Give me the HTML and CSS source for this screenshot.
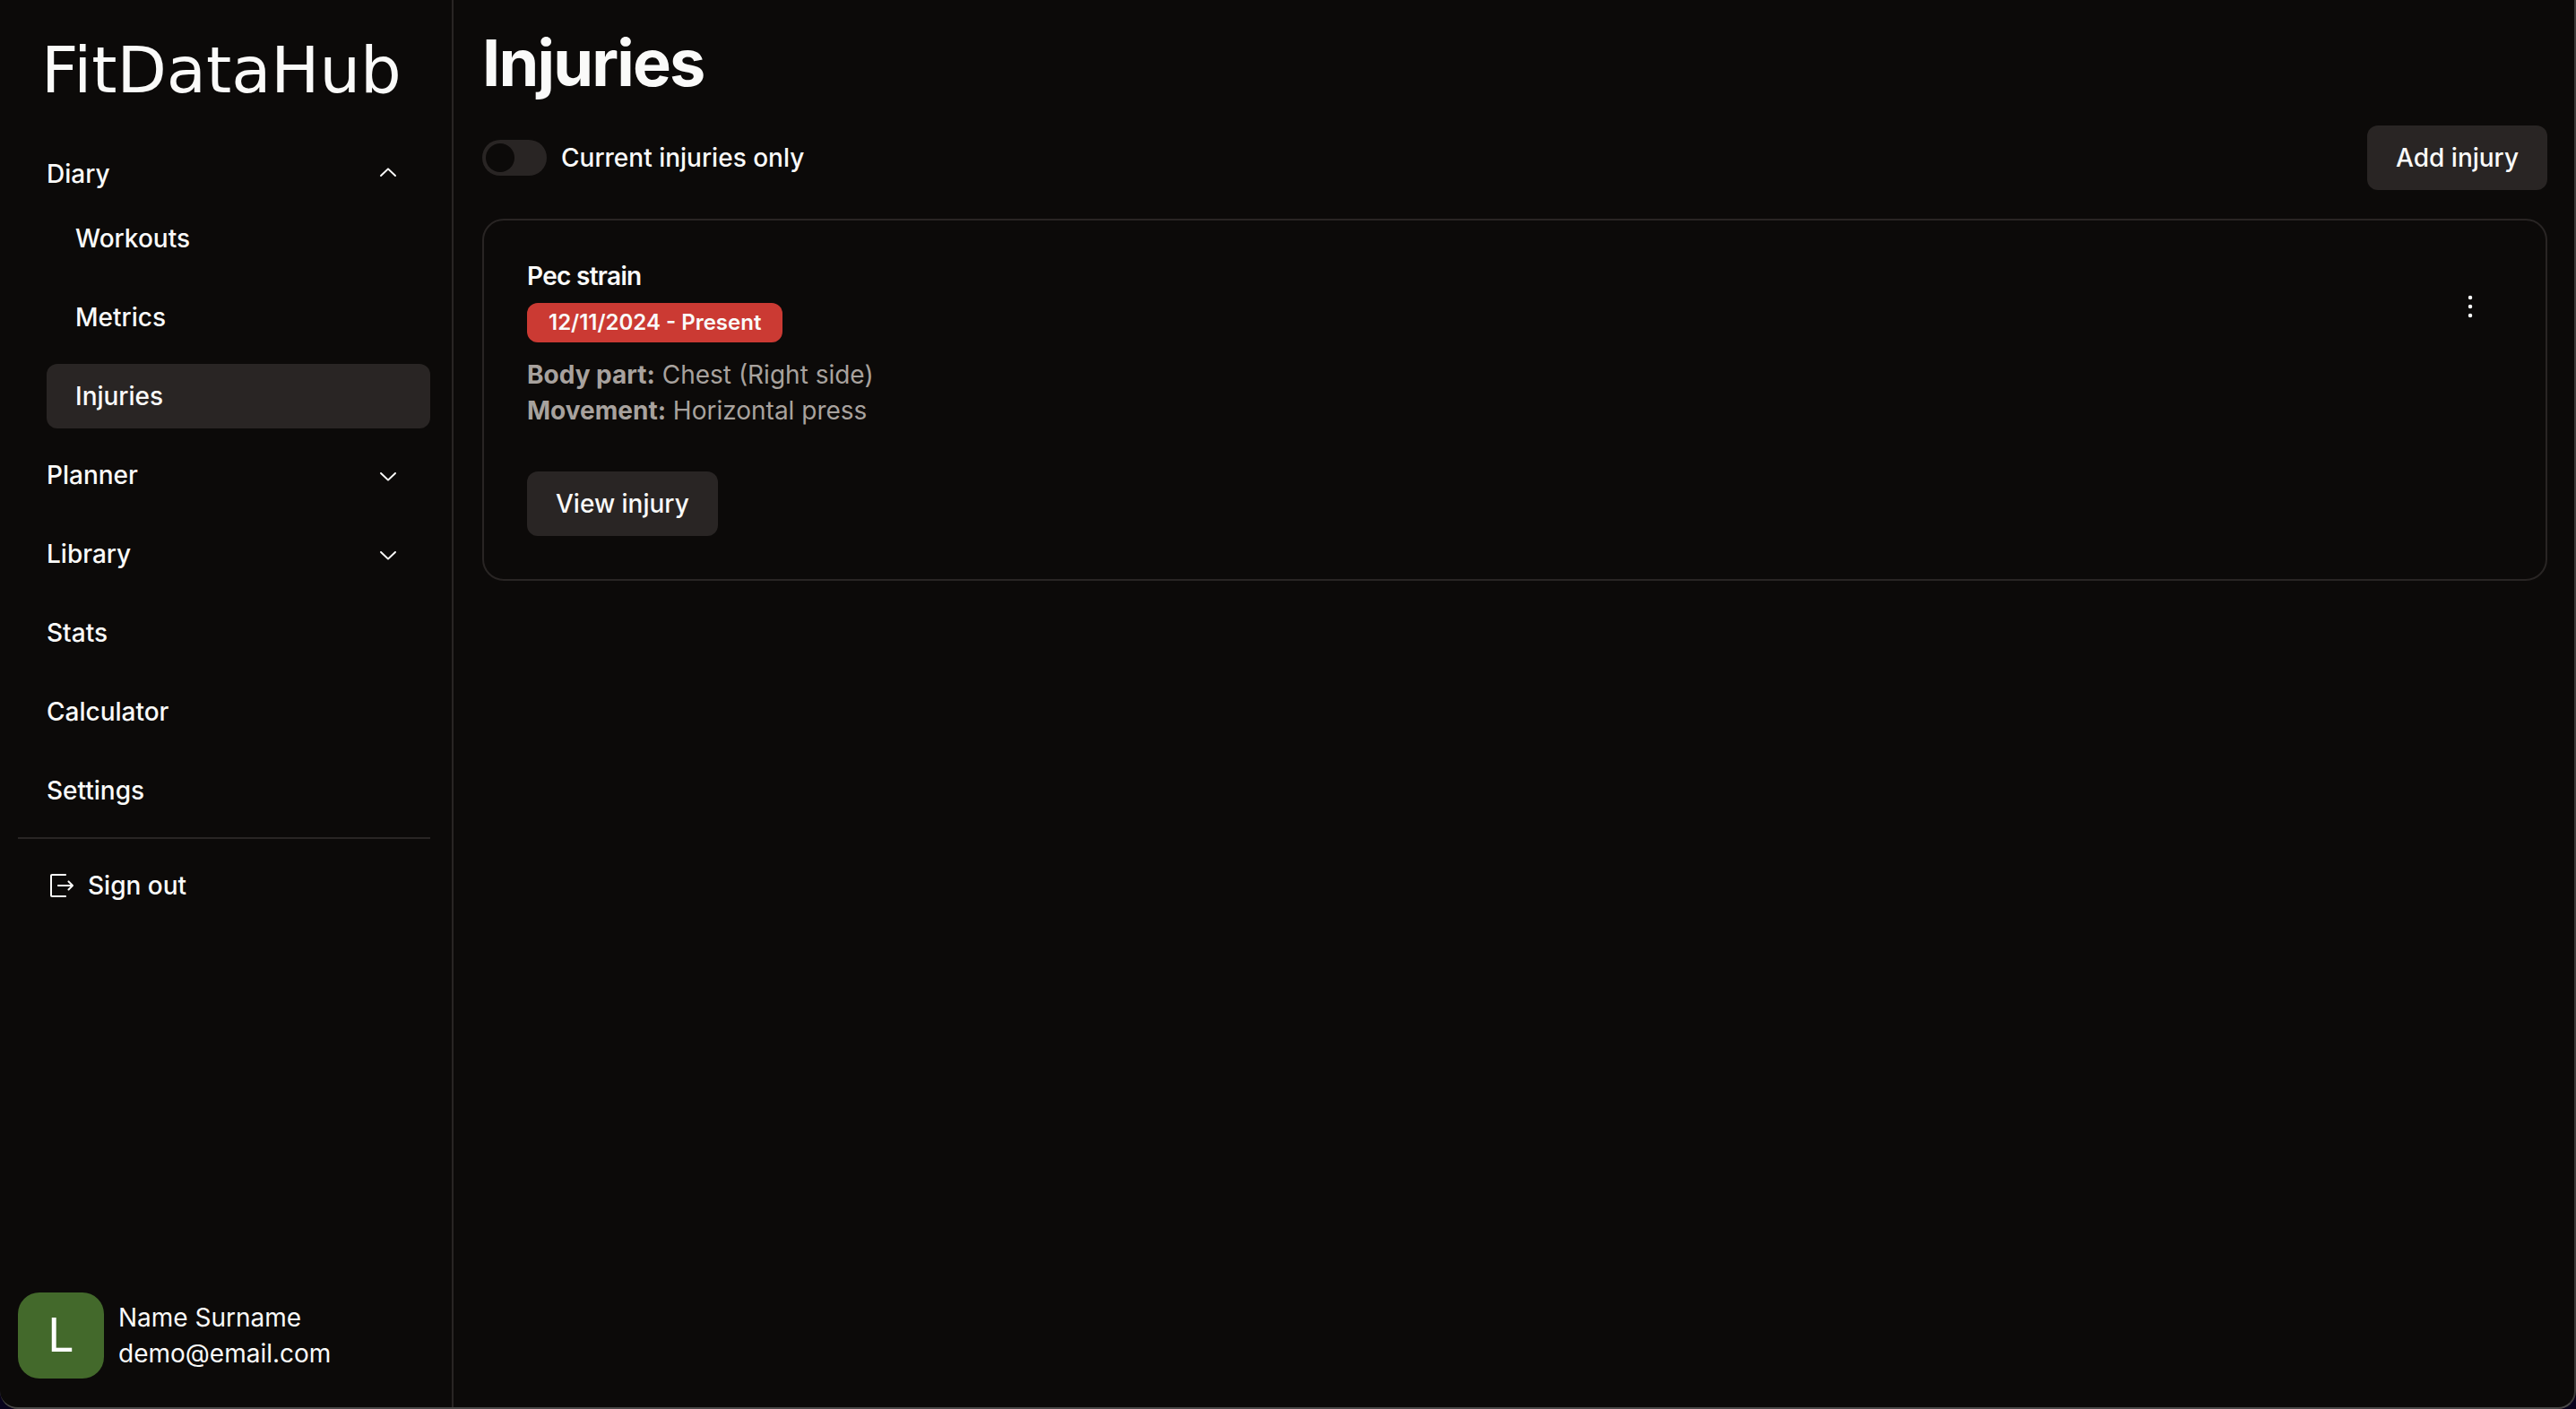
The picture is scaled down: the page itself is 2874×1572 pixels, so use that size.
FILE: index.html
```
<!DOCTYPE html>
<html lang="en">
<head>
  <meta charset="UTF-8">
  <meta name="viewport" content="width=device-width, initial-scale=1">
  <title>FitDataHub</title>
  <link rel="stylesheet" href="styles.css">
</head>
<body>
  <div class="layout">
    <aside class="sidebar">
      <a class="logo" href="#">FitDataHub</a>

      <nav class="nav">
        <div class="nav-group">
          <button class="nav-item" type="button" aria-expanded="true">
            Diary
            <svg class="icon chevron-up" viewBox="0 0 15 15" fill="currentColor"><path d="M3.135 6.158C3.324 5.957 3.641 5.946 3.842 6.135L7.5 9.565L11.158 6.135C11.36 5.946 11.676 5.957 11.865 6.158C12.054 6.359 12.043 6.676 11.842 6.865L7.842 10.615C7.65 10.795 7.35 10.795 7.158 10.615L3.158 6.865C2.957 6.676 2.946 6.359 3.135 6.158Z"/></svg>
          </button>
          <div class="sub-nav">
            <a class="sub-item" href="#">Workouts</a>
            <a class="sub-item" href="#">Metrics</a>
            <a class="sub-item active" href="#">Injuries</a>
          </div>
        </div>
        <button class="nav-item" type="button" aria-expanded="false">
          Planner
          <svg class="icon" viewBox="0 0 15 15" fill="currentColor"><path d="M3.135 6.158C3.324 5.957 3.641 5.946 3.842 6.135L7.5 9.565L11.158 6.135C11.36 5.946 11.676 5.957 11.865 6.158C12.054 6.359 12.043 6.676 11.842 6.865L7.842 10.615C7.65 10.795 7.35 10.795 7.158 10.615L3.158 6.865C2.957 6.676 2.946 6.359 3.135 6.158Z"/></svg>
        </button>
        <button class="nav-item" type="button" aria-expanded="false">
          Library
          <svg class="icon" viewBox="0 0 15 15" fill="currentColor"><path d="M3.135 6.158C3.324 5.957 3.641 5.946 3.842 6.135L7.5 9.565L11.158 6.135C11.36 5.946 11.676 5.957 11.865 6.158C12.054 6.359 12.043 6.676 11.842 6.865L7.842 10.615C7.65 10.795 7.35 10.795 7.158 10.615L3.158 6.865C2.957 6.676 2.946 6.359 3.135 6.158Z"/></svg>
        </button>
        <a class="nav-item" href="#">Stats</a>
        <a class="nav-item" href="#">Calculator</a>
        <a class="nav-item" href="#">Settings</a>
        <hr class="separator">
        <button class="nav-item sign-out" type="button">
          <svg class="icon" viewBox="0 0 15 15" fill="currentColor"><path fill-rule="evenodd" d="M3 1C2.448 1 2 1.448 2 2V13C2 13.552 2.448 14 3 14H10.5C10.776 14 11 13.776 11 13.5C11 13.224 10.776 13 10.5 13H3V2L10.5 2C10.776 2 11 1.776 11 1.5C11 1.224 10.776 1 10.5 1H3ZM12.604 4.896C12.408 4.701 12.092 4.701 11.896 4.896C11.701 5.092 11.701 5.408 11.896 5.604L13.293 7H6.5C6.224 7 6 7.224 6 7.5C6 7.776 6.224 8 6.5 8H13.293L11.896 9.396C11.701 9.592 11.701 9.908 11.896 10.104C12.092 10.299 12.408 10.299 12.604 10.104L14.854 7.854C15.049 7.658 15.049 7.342 14.854 7.146L12.604 4.896Z"/></svg>
          Sign out
        </button>
      </nav>

      <div class="profile">
        <div class="avatar">L</div>
        <div class="profile-text">
          <div>Name Surname</div>
          <div>demo@email.com</div>
        </div>
      </div>
    </aside>

    <main class="content">
      <h1>Injuries</h1>

      <div class="toolbar">
        <div class="filter">
          <input class="switch" type="checkbox" role="switch" id="current-only">
          <label for="current-only">Current injuries only</label>
        </div>
        <button class="btn" type="button">Add injury</button>
      </div>

      <article class="card">
        <div class="card-header">
          <div>
            <h2>Pec strain</h2>
            <span class="badge">12/11/2024 - Present</span>
          </div>
          <button class="menu-btn" type="button" aria-label="Open menu">
            <svg class="icon" viewBox="0 0 15 15" fill="currentColor"><circle cx="7.5" cy="2.5" r="1.125"/><circle cx="7.5" cy="7.5" r="1.125"/><circle cx="7.5" cy="12.5" r="1.125"/></svg>
          </button>
        </div>
        <div class="card-body">
          <p><strong>Body part:</strong> Chest (Right side)</p>
          <p><strong>Movement:</strong> Horizontal press</p>
        </div>
        <button class="btn" type="button">View injury</button>
      </article>
    </main>
  </div>
</body>
</html>
```

FILE: styles.css
```
* {
  box-sizing: border-box;
  margin: 0;
  padding: 0;
}

body {
  font-family: Inter, "Liberation Sans", sans-serif;
  font-size: 28px;
  line-height: 40px;
  color: #fafaf9;
  background-color: #0c0a09;
}

/* window edge */
body::after {
  content: "";
  position: fixed;
  inset: 0;
  border-right: 2px solid #3d3b3a;
  border-bottom: 2px solid #4a4948;
  border-radius: 0 0 20px 20px;
  box-shadow: 0 0 0 20px #08021c;
  pointer-events: none;
}

a {
  color: inherit;
  text-decoration: none;
}

button {
  font: inherit;
  color: inherit;
  background: none;
  border: none;
  cursor: pointer;
}

.icon {
  width: 30px;
  height: 30px;
  flex-shrink: 0;
}

.layout {
  display: flex;
  min-height: 100vh;
}

/* sidebar */
.sidebar {
  display: flex;
  flex-direction: column;
  flex-shrink: 0;
  width: 506px;
  padding: 38px 24px 34px 20px;
  border-right: 2px solid #292524;
}

.logo {
  margin-bottom: 40px;
  padding-left: 26px;
  font-family: "DejaVu Sans", sans-serif;
  font-size: 72px;
  line-height: 80px;
}

.nav {
  display: flex;
  flex-direction: column;
  gap: 16px;
}

.nav-item,
.sub-item {
  display: flex;
  align-items: center;
  justify-content: space-between;
  width: 100%;
  height: 72px;
  padding: 0 32px;
  font-weight: 500;
  border-radius: 12px;
}

.sub-nav {
  display: flex;
  flex-direction: column;
  gap: 16px;
  padding-left: 32px;
}

.active,
.nav-item:hover,
.sub-item:hover {
  background-color: #292524;
}

.chevron-up {
  transform: rotate(180deg);
}

.separator {
  border: none;
  height: 2px;
  background-color: #292524;
}

.sign-out {
  justify-content: flex-start;
  gap: 16px;
}

.profile {
  display: flex;
  align-items: center;
  gap: 16px;
  margin-top: auto;
}

.avatar {
  display: flex;
  align-items: center;
  justify-content: center;
  width: 96px;
  height: 96px;
  font-size: 52px;
  color: #fff;
  background-color: #43692b;
  border-radius: 24px;
}

/* main */
.content {
  display: flex;
  flex-direction: column;
  flex: 1;
  gap: 32px;
  padding: 32px;
}

h1 {
  font-size: 72px;
  line-height: 76px;
  font-weight: 700;
  letter-spacing: -0.025em;
}

.toolbar {
  display: flex;
  align-items: center;
  justify-content: space-between;
}

.filter {
  display: flex;
  align-items: center;
  gap: 16px;
  font-weight: 500;
}

.switch {
  appearance: none;
  display: flex;
  width: 72px;
  height: 40px;
  padding: 4px;
  background-color: #292524;
  border-radius: 20px;
  cursor: pointer;
}

.switch::before {
  content: "";
  width: 32px;
  height: 32px;
  background-color: #0c0a09;
  border-radius: 50%;
}

.switch:checked {
  justify-content: flex-end;
  background-color: #fafaf9;
}

.btn {
  height: 72px;
  padding: 0 32px;
  font-weight: 500;
  background-color: #292524;
  border-radius: 12px;
}

.btn:hover {
  background-color: #44403c;
}

.card {
  padding: 48px;
  border: 2px solid #292524;
  border-radius: 24px;
}

.card-header {
  display: flex;
  align-items: center;
  justify-content: space-between;
  height: 96px;
}

h2 {
  margin-bottom: 16px;
  font-size: 28px;
  line-height: 28px;
  font-weight: 600;
  letter-spacing: -0.025em;
}

.badge {
  display: block;
  margin-bottom: 8px;
  padding: 6px 24px;
  font-size: 24px;
  line-height: 32px;
  font-weight: 600;
  background-color: #cb3a33;
  border-radius: 12px;
}

.menu-btn {
  display: flex;
  align-items: center;
  justify-content: center;
  width: 72px;
  height: 72px;
}

.card-body {
  margin: 8px 0 48px;
  color: #a8a29e;
}
```
